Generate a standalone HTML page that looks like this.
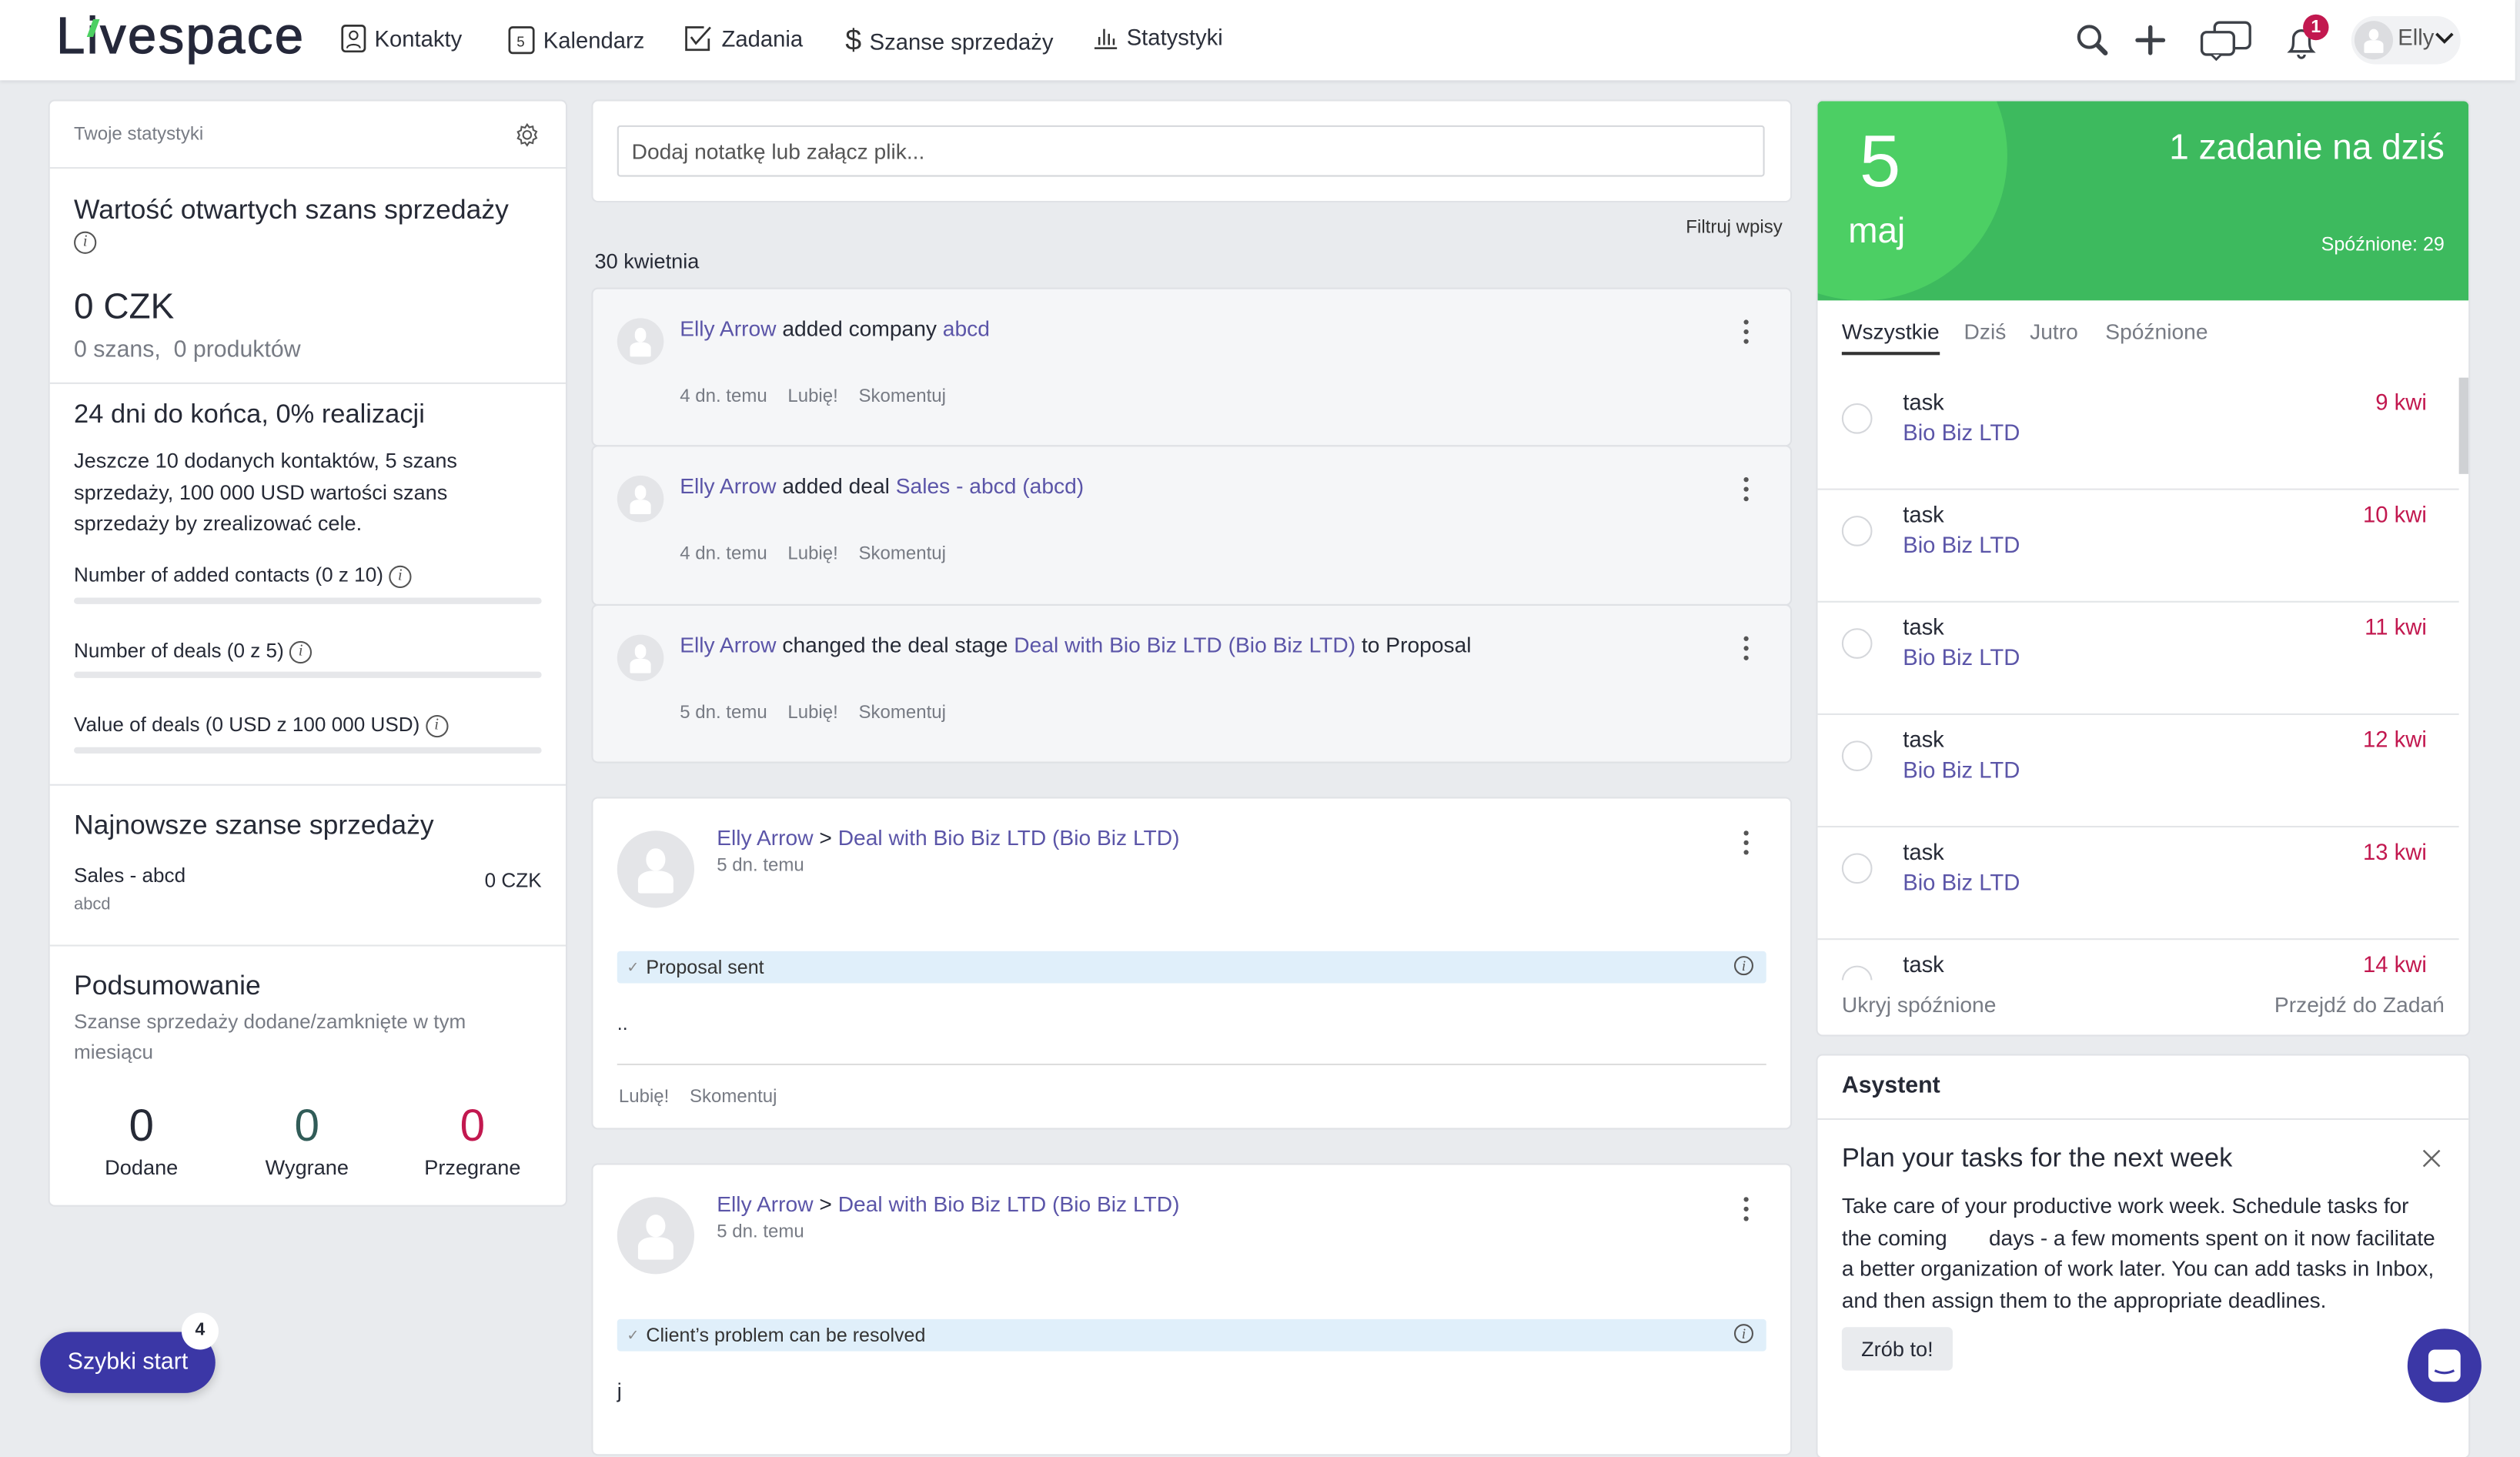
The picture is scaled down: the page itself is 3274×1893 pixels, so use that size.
<!DOCTYPE html>
<html><head><meta charset="utf-8"><style>
*{box-sizing:border-box;margin:0;padding:0}
html,body{width:3274px;height:1860px;overflow:hidden;background:#e9ebee}
#w{position:absolute;left:0;top:0;width:1568px;height:891px;transform:scale(2.088,2.0875);transform-origin:0 0;font-family:"Liberation Sans",sans-serif;color:#262a36;background:#e9ebee}
.a{position:absolute}
.card{position:absolute;background:#fff;border-radius:3px;box-shadow:0 0 0 1px #e0e2e6}
.lnk{color:#5b55a8}
.g{color:#777b84}
.hr{position:absolute;left:0;right:0;height:1px;background:#e3e5e8}
.nav{position:absolute;top:15px;font-size:14px;color:#2b2f3a;display:flex;align-items:center;gap:5px}
.info{display:inline-block;width:14px;height:14px;border:1px solid #555;border-radius:50%;font:italic 10px "Liberation Serif",serif;text-align:center;line-height:12px;color:#555;vertical-align:1px}
.bar{position:absolute;left:15px;width:291px;height:4px;border-radius:2px;background:#e6e7ea}
.act{position:absolute;left:369px;width:745px;background:#f5f6f8;border-radius:3px;box-shadow:0 0 0 1px #dfe1e5}
.av{position:absolute;border-radius:50%;background:#e4e5e8;overflow:hidden}
.av:before{content:"";position:absolute;left:37%;top:22%;width:26%;height:30%;background:#fff;border-radius:50%}
.av:after{content:"";position:absolute;left:27%;top:52%;width:46%;height:30%;background:#fff;border-radius:40% 40% 8% 8%}
.dots{position:absolute;right:26px;width:3px}
.dots i{display:block;width:3px;height:3px;border-radius:50%;background:#555;margin-bottom:3px}
.row{position:absolute;left:0;width:399px;height:70px;border-bottom:1px solid #e3e5e8}
.row .c{position:absolute;left:15px;top:16px;width:19px;height:19px;border:1px solid #d5d7db;border-radius:50%}
.row .t{position:absolute;left:53px;top:7px;font-size:14px}
.row .b{position:absolute;left:53px;top:26px;font-size:14px;color:#5b55a8}
.row .d{position:absolute;right:20px;top:7px;font-size:14px;color:#c2184f}
.stage{position:absolute;left:15px;right:15px;height:20px;background:#e0effa;border-radius:2px;font-size:12px;line-height:20px;padding-left:18px;color:#333}
.stage:before{content:"✓";position:absolute;left:6px;font-size:9px;color:#888}
.stage .info{position:absolute;right:8px;top:3px;width:12px;height:12px;font-size:9px;line-height:10px}
</style></head><body><div id="w">

<div class="a" style="left:0;top:0;width:1565px;height:50px;background:#fff;box-shadow:0 1px 2px #d6d8dc"></div>
<div class="a" style="left:35px;top:4px;font-size:32px;color:#25283a;letter-spacing:1.2px;-webkit-text-stroke:0.6px #25283a">L<span style="position:relative">i<span style="position:absolute;left:2px;top:8px;width:4px;height:11px;background:#4cd062;transform:skewX(-20deg)"></span></span>vespace</div>
<div class="nav" style="left:212px"><svg width="16" height="18" viewBox="0 0 16 18"><rect x="1" y="1" width="14" height="16" rx="2" fill="none" stroke="#333" stroke-width="1.3"/><circle cx="8" cy="7" r="2.5" fill="none" stroke="#333"/><path d="M4 15c0-3 8-3 8 0" fill="none" stroke="#333"/></svg>Kontakty</div>
<div class="nav" style="left:316px"><svg width="17" height="19" viewBox="0 0 17 19"><rect x="1" y="2" width="15" height="16" rx="2" fill="none" stroke="#333" stroke-width="1.3"/><text x="5.5" y="14" font-size="9" fill="#333" font-family="Liberation Sans">5</text></svg>Kalendarz</div>
<div class="nav" style="left:426px"><svg width="18" height="18" viewBox="0 0 18 18"><path d="M15 9v7H1V2h11" fill="none" stroke="#333" stroke-width="1.3"/><path d="M4 8l3 4 9-10" fill="none" stroke="#333" stroke-width="1.3"/></svg>Zadania</div>
<div class="nav" style="left:526px"><span style="font-size:18px;color:#333">$</span>Szanse sprzedaży</div>
<div class="nav" style="left:680px"><svg width="16" height="16" viewBox="0 0 16 16"><path d="M1 15h14M4 13V8M7 13V3M10 13V6M13 13V9" stroke="#333" stroke-width="1.2"/></svg>Statystyki</div>
<svg class="a" style="left:1291px;top:14px" width="22" height="22" viewBox="0 0 22 22"><circle cx="9" cy="9" r="6.5" fill="none" stroke="#3d4148" stroke-width="2"/><path d="M14 14l5 5" stroke="#3d4148" stroke-width="3" stroke-linecap="round"/></svg>
<svg class="a" style="left:1328px;top:15px" width="20" height="20"><path d="M10 2v16M2 10h16" stroke="#3d4148" stroke-width="2.6" stroke-linecap="round"/></svg>
<svg class="a" style="left:1368px;top:12px" width="34" height="26" viewBox="0 0 34 26"><rect x="10" y="2" width="22" height="16" rx="3" fill="#fff" stroke="#3d4148" stroke-width="1.6"/><rect x="2" y="8" width="20" height="14" rx="3" fill="#fff" stroke="#3d4148" stroke-width="1.6"/><path d="M8 22l3 3 3-3" fill="#fff" stroke="#3d4148" stroke-width="1.4"/></svg>
<svg class="a" style="left:1420px;top:13px" width="24" height="24" viewBox="0 0 24 24"><path d="M5 19c2-2 2-4 2-8a5 5 0 0110 0c0 4 0 6 2 8z" fill="none" stroke="#3d4148" stroke-width="1.6"/><path d="M10 21a2 2 0 004 0" fill="none" stroke="#3d4148" stroke-width="1.5"/></svg>
<div class="a" style="left:1433px;top:9px;width:16px;height:16px;border-radius:50%;background:#c2184f;color:#fff;font-size:11px;font-weight:bold;text-align:center;line-height:16px">1</div>
<div class="a" style="left:1463px;top:10px;width:68px;height:30px;border-radius:15px;background:#f1f2f4"></div>
<div class="av" style="left:1465px;top:13px;width:24px;height:24px;background:#dcdde0"></div>
<div class="a" style="left:1492px;top:15px;font-size:14px;color:#555">Elly</div>
<svg class="a" style="left:1514px;top:19px" width="14" height="10"><path d="M2 2l5 5 5-5" fill="none" stroke="#222" stroke-width="1.8"/></svg>

<div class="card" style="left:31px;top:63px;width:321px;height:687px">
 <div class="a g" style="left:15px;top:15px;font-size:11.5px">Twoje statystyki</div>
 <svg class="a" style="left:289px;top:13px" width="16" height="16" viewBox="0 0 16 16"><circle cx="8" cy="8" r="2.5" fill="none" stroke="#555"/><path d="M8 1.5l1.3 1.8 2.2-.6.3 2.2 2 1-1 2 1 2-2 1-.3 2.2-2.2-.6L8 14.5l-1.3-1.8-2.2.6-.3-2.2-2-1 1-2-1-2 2-1 .3-2.2 2.2.6z" fill="none" stroke="#555"/></svg>
 <div class="hr" style="top:41px"></div>
 <div class="a" style="left:15px;top:58px;font-size:17px">Wartość otwartych szans sprzedaży</div>
 <div class="a" style="left:15px;top:78px"><span class="info">i</span></div>
 <div class="a" style="left:15px;top:115px;font-size:22px">0 CZK</div>
 <div class="a g" style="left:15px;top:147px;font-size:14.5px">0 szans,&nbsp; 0 produktów</div>
 <div class="hr" style="top:175px"></div>
 <div class="a" style="left:15px;top:186px;font-size:16.5px">24 dni do końca, 0% realizacji</div>
 <div class="a" style="left:15px;top:214px;width:290px;font-size:13px;line-height:19.5px">Jeszcze 10 dodanych kontaktów, 5 szans sprzedaży, 100 000 USD wartości szans sprzedaży by zrealizować cele.</div>
 <div class="a" style="left:15px;top:288px;font-size:12.5px">Number of added contacts (0 z 10) <span class="info">i</span></div>
 <div class="bar" style="top:309px"></div>
 <div class="a" style="left:15px;top:335px;font-size:12.5px">Number of deals (0 z 5) <span class="info">i</span></div>
 <div class="bar" style="top:355px"></div>
 <div class="a" style="left:15px;top:381px;font-size:12.5px">Value of deals (0 USD z 100 000 USD) <span class="info">i</span></div>
 <div class="bar" style="top:402px"></div>
 <div class="hr" style="top:425px"></div>
 <div class="a" style="left:15px;top:441px;font-size:17px">Najnowsze szanse sprzedaży</div>
 <div class="a" style="left:15px;top:475px;font-size:12.5px">Sales - abcd</div>
 <div class="a g" style="left:15px;top:494px;font-size:10.5px">abcd</div>
 <div class="a" style="right:15px;top:478px;font-size:12.5px">0 CZK</div>
 <div class="hr" style="top:525px"></div>
 <div class="a" style="left:15px;top:541px;font-size:17px">Podsumowanie</div>
 <div class="a g" style="left:15px;top:564px;width:290px;font-size:12.5px;line-height:19px">Szanse sprzedaży dodane/zamknięte w tym miesiącu</div>
 <div class="a" style="left:32px;top:622px;width:50px;text-align:center;font-size:28px">0</div>
 <div class="a" style="left:12px;top:656px;width:90px;text-align:center;font-size:13px">Dodane</div>
 <div class="a" style="left:135px;top:622px;width:50px;text-align:center;font-size:28px;color:#315c58">0</div>
 <div class="a" style="left:115px;top:656px;width:90px;text-align:center;font-size:13px">Wygrane</div>
 <div class="a" style="left:238px;top:622px;width:50px;text-align:center;font-size:28px;color:#c2184f">0</div>
 <div class="a" style="left:218px;top:656px;width:90px;text-align:center;font-size:13px">Przegrane</div>
</div>

<div class="card" style="left:369px;top:63px;width:745px;height:62px">
 <div class="a" style="left:15px;top:15px;width:714px;height:32px;border:1px solid #d5d7db;border-radius:2px;font-size:13.5px;color:#555;padding:8px 8px">Dodaj notatkę lub załącz plik...</div>
</div>
<div class="a" style="left:1049px;top:136px;font-size:11.5px;color:#333">Filtruj wpisy</div>
<div class="a" style="left:370px;top:155px;font-size:13px">30 kwietnia</div>

<div class="act" style="top:180px;height:97px">
 <div class="av" style="left:15px;top:18px;width:29px;height:29px"></div>
 <div class="a" style="left:54px;top:17px;font-size:13.5px"><span class="lnk">Elly Arrow</span> added company <span class="lnk">abcd</span></div>
 <div class="dots" style="top:19px"><i></i><i></i><i></i></div>
 <div class="a g" style="left:54px;top:61px;font-size:11.5px">4 dn. temu&nbsp;&nbsp;&nbsp; Lubię!&nbsp;&nbsp;&nbsp; Skomentuj</div>
</div>
<div class="act" style="top:278px;height:98px">
 <div class="av" style="left:15px;top:18px;width:29px;height:29px"></div>
 <div class="a" style="left:54px;top:17px;font-size:13.5px"><span class="lnk">Elly Arrow</span> added deal <span class="lnk">Sales - abcd (abcd)</span></div>
 <div class="dots" style="top:19px"><i></i><i></i><i></i></div>
 <div class="a g" style="left:54px;top:61px;font-size:11.5px">4 dn. temu&nbsp;&nbsp;&nbsp; Lubię!&nbsp;&nbsp;&nbsp; Skomentuj</div>
</div>
<div class="act" style="top:377px;height:97px">
 <div class="av" style="left:15px;top:18px;width:29px;height:29px"></div>
 <div class="a" style="left:54px;top:17px;font-size:13.5px"><span class="lnk">Elly Arrow</span> changed the deal stage <span class="lnk">Deal with Bio Biz LTD (Bio Biz LTD)</span> to Proposal</div>
 <div class="dots" style="top:19px"><i></i><i></i><i></i></div>
 <div class="a g" style="left:54px;top:61px;font-size:11.5px">5 dn. temu&nbsp;&nbsp;&nbsp; Lubię!&nbsp;&nbsp;&nbsp; Skomentuj</div>
</div>

<div class="card" style="left:369px;top:497px;width:745px;height:205px">
 <div class="av" style="left:15px;top:20px;width:48px;height:48px"></div>
 <div class="a" style="left:77px;top:17px;font-size:13.5px"><span class="lnk">Elly Arrow</span> &gt; <span class="lnk">Deal with Bio Biz LTD (Bio Biz LTD)</span></div>
 <div class="a g" style="left:77px;top:36px;font-size:11.5px">5 dn. temu</div>
 <div class="dots" style="top:20px"><i></i><i></i><i></i></div>
 <div class="stage" style="top:95px">Proposal sent<span class="info">i</span></div>
 <div class="a" style="left:15px;top:133px;font-size:12px">..</div>
 <div class="a" style="left:15px;right:15px;top:165px;height:1px;background:#ddd"></div>
 <div class="a g" style="left:16px;top:180px;font-size:11.5px">Lubię!&nbsp;&nbsp;&nbsp; Skomentuj</div>
</div>
<div class="card" style="left:369px;top:725px;width:745px;height:180px">
 <div class="av" style="left:15px;top:20px;width:48px;height:48px"></div>
 <div class="a" style="left:77px;top:17px;font-size:13.5px"><span class="lnk">Elly Arrow</span> &gt; <span class="lnk">Deal with Bio Biz LTD (Bio Biz LTD)</span></div>
 <div class="a g" style="left:77px;top:36px;font-size:11.5px">5 dn. temu</div>
 <div class="dots" style="top:20px"><i></i><i></i><i></i></div>
 <div class="stage" style="top:96px">Client’s problem can be resolved<span class="info">i</span></div>
 <div class="a" style="left:15px;top:133px;font-size:13px">j</div>
</div>

<div class="card" style="left:1131px;top:63px;width:405px;height:581px;overflow:hidden">
 <div class="a" style="left:0;top:0;width:405px;height:124px;background:#3dba5e;overflow:hidden">
  <div class="a" style="left:-62px;top:-56px;width:180px;height:180px;border-radius:50%;background:#4ccf64"></div>
  <div class="a" style="left:26px;top:10px;font-size:46px;color:#fff">5</div>
  <div class="a" style="left:19px;top:68px;font-size:22px;color:#fff">maj</div>
  <div class="a" style="right:15px;top:16px;font-size:22px;color:#fff">1 zadanie na dziś</div>
  <div class="a" style="right:15px;top:82px;font-size:12px;color:#fff">Spóźnione: 29</div>
 </div>
 <div class="a" style="left:15px;top:136px;font-size:13.5px">Wszystkie</div>
 <div class="a" style="left:15px;top:156px;width:61px;height:1.5px;background:#333"></div>
 <div class="a g" style="left:91px;top:136px;font-size:13.5px">Dziś</div>
 <div class="a g" style="left:132px;top:136px;font-size:13.5px">Jutro</div>
 <div class="a g" style="left:179px;top:136px;font-size:13.5px">Spóźnione</div>
 <div class="a" style="left:0;top:172px;width:405px;height:375px;overflow:hidden">
  <div class="row" style="top:0"><div class="c"></div><div class="t">task</div><div class="b">Bio Biz LTD</div><div class="d">9 kwi</div></div>
  <div class="row" style="top:70px"><div class="c"></div><div class="t">task</div><div class="b">Bio Biz LTD</div><div class="d">10 kwi</div></div>
  <div class="row" style="top:140px"><div class="c"></div><div class="t">task</div><div class="b">Bio Biz LTD</div><div class="d">11 kwi</div></div>
  <div class="row" style="top:210px"><div class="c"></div><div class="t">task</div><div class="b">Bio Biz LTD</div><div class="d">12 kwi</div></div>
  <div class="row" style="top:280px"><div class="c"></div><div class="t">task</div><div class="b">Bio Biz LTD</div><div class="d">13 kwi</div></div>
  <div class="row" style="top:350px"><div class="c"></div><div class="t">task</div><div class="b">Bio Biz LTD</div><div class="d">14 kwi</div></div>
  <div class="a" style="left:399px;top:-10px;width:6px;height:70px;background:#cfd1d4"></div>
 </div>
 <div class="a g" style="left:15px;top:555px;font-size:13.5px">Ukryj spóźnione</div>
 <div class="a g" style="right:15px;top:555px;font-size:13.5px">Przejdź do Zadań</div>
</div>

<div class="card" style="left:1131px;top:657px;width:405px;height:250px">
 <div class="a" style="left:15px;top:11px;font-size:14.5px;font-weight:bold">Asystent</div>
 <div class="hr" style="top:39px"></div>
 <div class="a" style="left:15px;top:55px;font-size:16.5px">Plan your tasks for the next week</div>
 <svg class="a" style="left:376px;top:58px" width="12" height="12"><path d="M1 1l10 10M11 1L1 11" stroke="#666" stroke-width="1.2"/></svg>
 <div class="a" style="left:15px;top:84px;width:375px;font-size:13.4px;line-height:19.5px">Take care of your productive work week. Schedule tasks for the coming &nbsp;&nbsp;&nbsp;&nbsp;&nbsp; days - a few moments spent on it now facilitate a better organization of work later. You can add tasks in Inbox, and then assign them to the appropriate deadlines.</div>
 <div class="a" style="left:15px;top:169px;width:69px;height:27px;background:#e9ebee;border-radius:3px;font-size:13px;text-align:center;line-height:27px">Zrób to!</div>
</div>

<div class="a" style="left:25px;top:829px;width:109px;height:38px;border-radius:19px;background:#3b37a6;color:#fff;font-size:14.5px;text-align:center;line-height:38px;box-shadow:0 2px 6px rgba(0,0,0,.2)">Szybki start</div>
<div class="a" style="left:113px;top:817px;width:23px;height:23px;border-radius:50%;background:#fff;font-size:11px;font-weight:bold;text-align:center;line-height:23px">4</div>
<div class="a" style="left:1498px;top:827px;width:46px;height:46px;border-radius:50%;background:#3b37a6"></div>
<svg class="a" style="left:1510px;top:839px" width="22" height="22" viewBox="0 0 22 22"><rect x="1" y="1" width="20" height="20" rx="4" fill="#fff"/><path d="M5 14c4 2 8 2 12 0" fill="none" stroke="#3b37a6" stroke-width="1.5"/></svg>

</div></body></html>
